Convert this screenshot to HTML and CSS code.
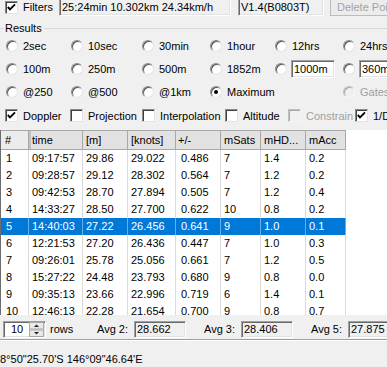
FILE: index.html
```html
<!DOCTYPE html>
<html lang="en">
<head>
    <meta charset="UTF-8">
    <meta name="viewport" content="width=device-width, initial-scale=1.0">
    <title>Results</title>
    <link rel="stylesheet" href="styles.css">
</head>
<body>

<div class="top-bar">
    <label class="opt filters"><span class="box"><svg width="11" height="11" viewBox="0 0 11 11"><polyline points="1.8,5 4,7.4 9,2.4" fill="none" stroke="#000" stroke-width="1.9"/></svg></span>Filters</label>
    <div class="field summary">25:24min 10.302km 24.34km/h</div>
    <div class="field version">V1.4(B0803T)</div>
    <button class="btn" disabled>Delete Points</button>
</div>

<div class="group-title"><span>Results</span></div>

<!-- result interval / distance options -->
<div class="options">
    <label class="opt"><span class="radio"></span>2sec</label>
    <label class="opt"><span class="radio"></span>10sec</label>
    <label class="opt"><span class="radio"></span>30min</label>
    <label class="opt"><span class="radio"></span>1hour</label>
    <label class="opt"><span class="radio"></span>12hrs</label>
    <label class="opt"><span class="radio"></span>24hrs</label>

    <label class="opt"><span class="radio"></span>100m</label>
    <label class="opt"><span class="radio"></span>250m</label>
    <label class="opt"><span class="radio"></span>500m</label>
    <label class="opt"><span class="radio"></span>1852m</label>
    <label class="opt tight"><span class="radio"></span><span class="input w44">1000m</span></label>
    <label class="opt tight"><span class="radio"></span><span class="input w44">360m</span></label>

    <label class="opt"><span class="radio"></span>@250</label>
    <label class="opt"><span class="radio"></span>@500</label>
    <label class="opt"><span class="radio"></span>@1km</label>
    <label class="opt"><span class="radio on"></span>Maximum</label>
    <span></span>
    <label class="opt disabled"><span class="radio"></span>Gates</label>
</div>

<div class="checks">
    <label class="opt"><span class="box"><svg width="11" height="11" viewBox="0 0 11 11"><polyline points="1.8,5 4,7.4 9,2.4" fill="none" stroke="#000" stroke-width="1.9"/></svg></span>Doppler</label>
    <label class="opt"><span class="box"></span>Projection</label>
    <label class="opt"><span class="box"></span>Interpolation</label>
    <label class="opt"><span class="box"></span>Altitude</label>
    <label class="opt disabled"><span class="box"></span>Constrain</label>
    <label class="opt"><span class="box"><svg width="11" height="11" viewBox="0 0 11 11"><polyline points="1.8,5 4,7.4 9,2.4" fill="none" stroke="#000" stroke-width="1.9"/></svg></span>1/Dop</label>
</div>

<!-- speed results grid -->
<div class="grid">
    <div class="row head">
        <span>#</span><span class="sorted">time</span><span>[m]</span><span>[knots]</span><span>+/-</span><span>mSats</span><span>mHD...</span><span>mAcc</span>
    </div>
    <div class="row"><span>1</span><span>09:17:57</span><span>29.86</span><span>29.022</span><span>0.486</span><span>7</span><span>1.4</span><span>0.2</span></div>
    <div class="row"><span>2</span><span>09:28:57</span><span>29.12</span><span>28.302</span><span>0.564</span><span>7</span><span>1.2</span><span>0.2</span></div>
    <div class="row"><span>3</span><span>09:42:53</span><span>28.70</span><span>27.894</span><span>0.505</span><span>7</span><span>1.2</span><span>0.4</span></div>
    <div class="row"><span>4</span><span>14:33:27</span><span>28.50</span><span>27.700</span><span>0.622</span><span>10</span><span>0.8</span><span>0.2</span></div>
    <div class="row selected"><span>5</span><span>14:40:03</span><span>27.22</span><span>26.456</span><span>0.641</span><span>9</span><span>1.0</span><span>0.1</span></div>
    <div class="row"><span>6</span><span>12:21:53</span><span>27.20</span><span>26.436</span><span>0.447</span><span>7</span><span>1.0</span><span>0.3</span></div>
    <div class="row"><span>7</span><span>09:26:01</span><span>25.78</span><span>25.056</span><span>0.661</span><span>7</span><span>1.2</span><span>0.5</span></div>
    <div class="row"><span>8</span><span>15:27:22</span><span>24.48</span><span>23.793</span><span>0.680</span><span>9</span><span>0.8</span><span>0.0</span></div>
    <div class="row"><span>9</span><span>09:35:13</span><span>23.66</span><span>22.996</span><span>0.719</span><span>6</span><span>1.4</span><span>0.1</span></div>
    <div class="row"><span>10</span><span>12:46:13</span><span>22.28</span><span>21.654</span><span>0.700</span><span>9</span><span>0.8</span><span>0.7</span></div>
</div>

<div class="bottom">
    <div class="spin">
        <span class="spin-value">10</span>
        <svg class="spin-btns" width="15" height="15" viewBox="0 0 15 15">
            <rect x="0.5" y="0.5" width="14" height="6.5" fill="#e9e9e9" stroke="#a8a8a8"/>
            <rect x="0.5" y="8" width="14" height="6.5" fill="#e9e9e9" stroke="#a8a8a8"/>
            <polygon points="5,5 7.5,2.5 10,5" fill="#222"/>
            <polygon points="5,10 7.5,12.5 10,10" fill="#222"/>
        </svg>
    </div>
    <span class="rows-label">rows</span>
    <div class="avg"><span class="avg-label">Avg 2:</span><span class="field avg-box">28.662</span></div>
    <div class="avg"><span class="avg-label">Avg 3:</span><span class="field avg-box">28.406</span></div>
    <div class="avg"><span class="avg-label">Avg 5:</span><span class="field avg-box">27.875</span></div>
</div>

<div class="status">8°50"25.70'S 146°09"46.64'E</div>

</body>
</html>
```

FILE: styles.css
```css
* {
    box-sizing: border-box;
}

html, body {
    margin: 0;
}

body {
    width: 387px;
    height: 367px;
    overflow: hidden;
    background: #f0f0f0;
    font-family: "Liberation Sans", Arial, sans-serif;
    font-size: 11px;
    color: #000;
}

/* top strip with filter summary */
.top-bar {
    display: flex;
    height: 18px;
    margin-top: -2px;
}

.top-bar > * {
    flex: none;
}

.filters {
    width: 59px;
    padding-left: 5px;
}

.field {
    display: block;
    border: 1px solid;
    border-color: #a0a0a0 #fff #fff #a0a0a0;
    box-shadow: inset 1px 1px 0 #696969, inset -1px -1px 0 #e3e3e3;
    padding: 0 2px;
    line-height: 16px;
    white-space: nowrap;
    overflow: hidden;
}

.summary {
    width: 172px;
}

.version {
    width: 86px;
    margin-left: 7px;
}

.btn {
    margin-left: 6px;
    width: 80px;
    padding: 0 0 0 6px;
    text-align: left;
    background: #ececec;
    border: 1px solid #bcbcbc;
    color: #a3a3a3;
    font: inherit;
    white-space: nowrap;
}

/* group box caption */
.group-title {
    display: flex;
    align-items: center;
    height: 12px;
    margin-top: 6px;
}

.group-title::before {
    content: "";
    width: 4px;
    border-top: 1px solid #d8d8d8;
}

.group-title::after {
    content: "";
    flex: 1;
    border-top: 1px solid #d8d8d8;
}

.group-title span {
    padding: 0 2px 0 1px;
}

/* radio + checkbox options */
.options {
    display: grid;
    grid-template-columns: 65px 71px 68px 65px 68px 1fr;
    grid-auto-rows: 23px;
    padding-left: 6px;
}

.opt {
    display: flex;
    align-items: center;
    gap: 5px;
    white-space: nowrap;
}

.opt.tight {
    gap: 4px;
}

.radio {
    flex: none;
    display: flex;
    align-items: center;
    justify-content: center;
    width: 12px;
    height: 12px;
    border-radius: 50%;
    background: #fff;
    border: 1px solid;
    border-color: #8a8a8a #e3e3e3 #e3e3e3 #8a8a8a;
    box-shadow: inset 1px 1px 0 #555;
}

.radio.on::after {
    content: "";
    width: 4px;
    height: 4px;
    border-radius: 50%;
    background: #000;
}

.box {
    flex: none;
    display: flex;
    align-items: center;
    justify-content: center;
    width: 13px;
    height: 13px;
    background: #fff;
    border: 1px solid;
    border-color: #8a8a8a #e3e3e3 #e3e3e3 #8a8a8a;
    box-shadow: inset 1px 1px 0 #404040;
}

.opt.disabled {
    color: #a0a0a0;
}

.opt.disabled .radio,
.opt.disabled .box {
    background: #f0f0f0;
    border-color: #c0c0c0 #f6f6f6 #f6f6f6 #c0c0c0;
    box-shadow: inset 1px 1px 0 #a8a8a8;
}

.input {
    flex: none;
    height: 18px;
    line-height: 16px;
    padding: 0 2px;
    background: #fff;
    border: 1px solid;
    border-color: #a0a0a0 #fff #fff #a0a0a0;
    box-shadow: inset 1px 1px 0 #696969, inset -1px -1px 0 #e3e3e3;
}

.w44 {
    width: 44px;
}

.checks {
    display: grid;
    grid-template-columns: 65px 72px 83px 63px 67px 1fr;
    height: 25px;
    align-items: center;
    padding-left: 5px;
    overflow: hidden;
}

/* results grid */
.grid {
    height: 185px;
    margin-top: 2px;
    background: #fff;
    border-left: 1px solid #6d6d6d;
    overflow: hidden;
}

.row {
    display: grid;
    grid-template-columns: 28px 54px 45px 48px 45px 40px 45px 40px;
    width: 345px;
    height: 17px;
    line-height: 17px;
}

.row > span {
    border-right: 1px solid #dadada;
    padding-left: 3px;
    white-space: nowrap;
    overflow: hidden;
}

.row > span:first-child {
    padding-left: 5px;
}

.row > span:nth-child(5) {
    padding-left: 5px;
}

.row.head {
    height: 20px;
    line-height: 18px;
    background: #e2e2e2;
    border-top: 1px solid #a8a8a8;
    border-bottom: 1px solid #a8a8a8;
}

.row.head > span {
    border-right-color: #a8a8a8;
}

.row.head > span:first-child {
    padding-left: 4px;
    background: #ececec;
}

.row.head > span:nth-child(5) {
    padding-left: 2px;
}

.row.head .sorted {
    box-shadow: inset 2px 0 0 #c2c2c2;
}

.row.selected {
    background: #0078d7;
    color: #fff;
}

.row.selected > span {
    border-right-color: #6aaee6;
}

/* bottom controls */
.bottom {
    display: flex;
    align-items: center;
    height: 25px;
    padding: 6px 0 2px 3px;
    border-bottom: 1px solid #a0a0a0;
    box-shadow: 0 1px 0 #fff;
}

.bottom > * {
    flex: none;
}

.spin {
    display: flex;
    align-items: center;
    justify-content: space-between;
    width: 43px;
    height: 17px;
    padding: 0 1px 0 7px;
    background: #fff;
    border: 1px solid;
    border-color: #a0a0a0 #fff #fff #a0a0a0;
    box-shadow: inset 1px 1px 0 #696969, inset -1px -1px 0 #e3e3e3;
}

.rows-label {
    width: 51px;
    padding-left: 4px;
}

.avg {
    display: flex;
    align-items: center;
    gap: 6px;
    width: 107px;
}

.avg-label {
    width: 31px;
    flex: none;
}

.avg-box {
    width: 52px;
    height: 17px;
    flex: none;
    line-height: 15px;
}

.status {
    padding-top: 12px;
    line-height: 14px;
    white-space: nowrap;
}
```
